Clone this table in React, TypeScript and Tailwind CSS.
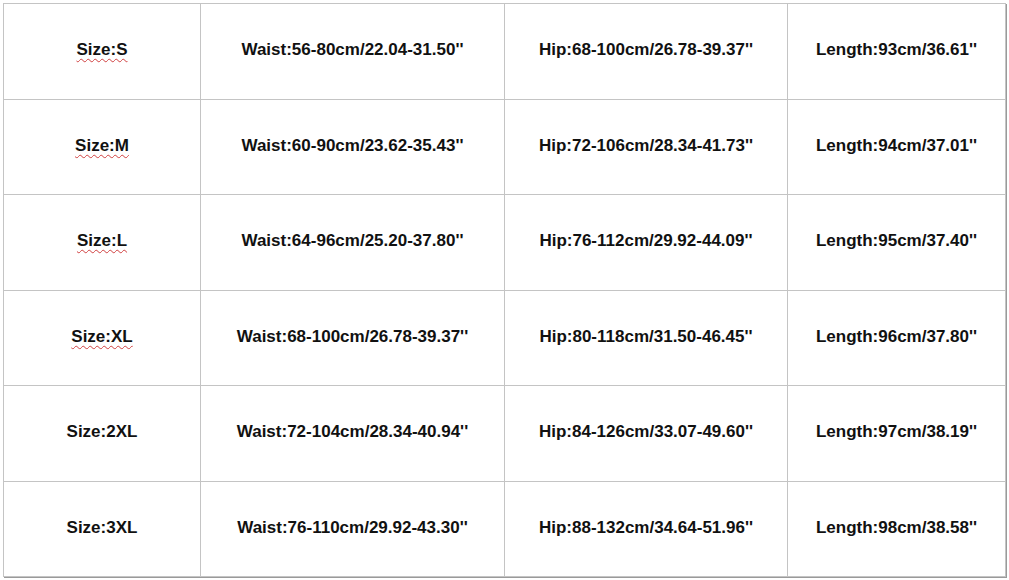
import React from "react";

// Size chart rows
const rows = [
  { size: "Size:S", waist: "Waist:56-80cm/22.04-31.50''", hip: "Hip:68-100cm/26.78-39.37''", length: "Length:93cm/36.61''", flagged: true },
  { size: "Size:M", waist: "Waist:60-90cm/23.62-35.43''", hip: "Hip:72-106cm/28.34-41.73''", length: "Length:94cm/37.01''", flagged: true },
  { size: "Size:L", waist: "Waist:64-96cm/25.20-37.80''", hip: "Hip:76-112cm/29.92-44.09''", length: "Length:95cm/37.40''", flagged: true },
  { size: "Size:XL", waist: "Waist:68-100cm/26.78-39.37''", hip: "Hip:80-118cm/31.50-46.45''", length: "Length:96cm/37.80''", flagged: true },
  { size: "Size:2XL", waist: "Waist:72-104cm/28.34-40.94''", hip: "Hip:84-126cm/33.07-49.60''", length: "Length:97cm/38.19''", flagged: false },
  { size: "Size:3XL", waist: "Waist:76-110cm/29.92-43.30''", hip: "Hip:88-132cm/34.64-51.96''", length: "Length:98cm/38.58''", flagged: false },
];

function Cell({ children }: { children: React.ReactNode }) {
  return (
    <div className="flex items-center justify-center border-r border-b border-[#c4c4c4] h-[95.5px] pb-[3px]">
      {children}
    </div>
  );
}

export default function App() {
  return (
    <div className="w-[1009px] h-[580px] bg-white pt-[3px] pl-[3px] font-['Liberation_Sans',Arial,sans-serif] font-bold text-[17px] text-[#111]">
      <div className="grid grid-cols-[197px_304px_283px_218px] w-[1003px] border-l border-t border-[#c4c4c4] shadow-[1px_1px_0_#9a9a9a]">
        {rows.map((row) => (
          <React.Fragment key={row.size}>
            <Cell>
              <span
                className={
                  row.flagged
                    ? "underline decoration-wavy decoration-[#d04040] decoration-1 underline-offset-[3px]"
                    : ""
                }
              >
                {row.size}
              </span>
            </Cell>
            <Cell>{row.waist}</Cell>
            <Cell>{row.hip}</Cell>
            <Cell>{row.length}</Cell>
          </React.Fragment>
        ))}
      </div>
    </div>
  );
}
